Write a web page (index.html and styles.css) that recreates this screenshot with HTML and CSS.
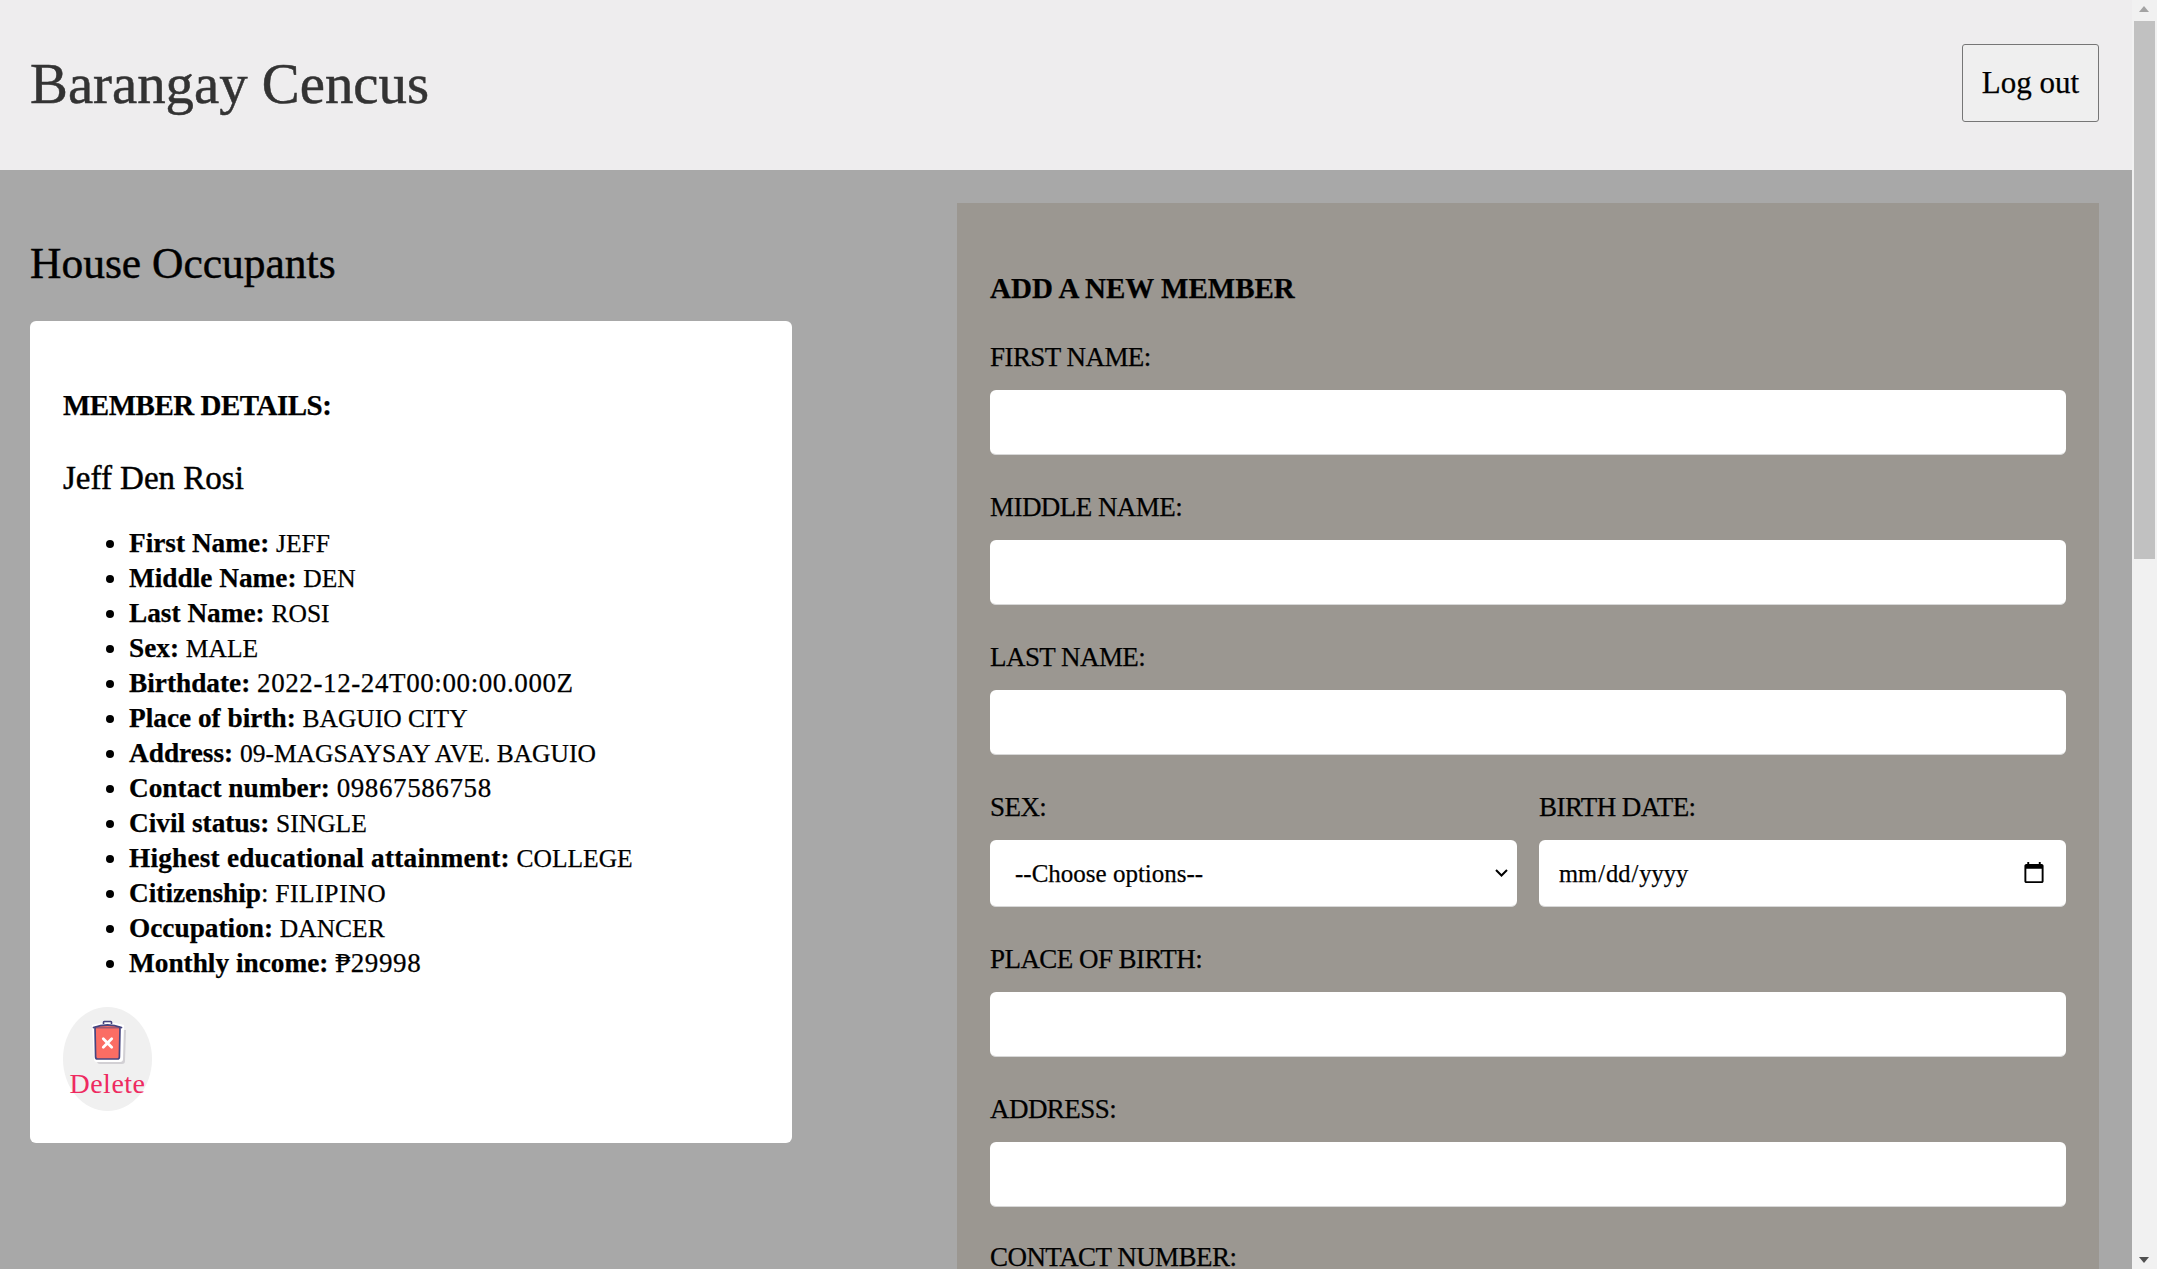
FILE: index.html
```html
<!DOCTYPE html>
<html lang="en">
<head>
<meta charset="utf-8">
<title>Barangay Cencus</title>
<link rel="stylesheet" href="styles.css">
</head>
<body>
<div class="page">
<header class="topbar">
  <h1 class="brand">Barangay Cencus</h1>
  <button class="logout" type="button">Log out</button>
</header>
<main class="content">
  <section class="occupants">
    <h2 class="occupants-title">House Occupants</h2>
    <article class="card">
      <h3 class="card-title">MEMBER DETAILS:</h3>
      <h3 class="member-name">Jeff Den Rosi</h3>
      <ul class="details">
        <li><b>First Name:</b> <span class="val">JEFF</span></li>
        <li><b>Middle Name:</b> <span class="val">DEN</span></li>
        <li><b>Last Name:</b> <span class="val">ROSI</span></li>
        <li><b>Sex:</b> <span class="val">MALE</span></li>
        <li><b>Birthdate:</b> <span class="num">2022-12-24T00:00:00.000Z</span></li>
        <li><b>Place of birth:</b> <span class="val">BAGUIO CITY</span></li>
        <li><b>Address:</b> <span class="val">09-MAGSAYSAY AVE. BAGUIO</span></li>
        <li><b>Contact number:</b> <span class="num">09867586758</span></li>
        <li><b>Civil status:</b> <span class="val">SINGLE</span></li>
        <li><b class="long">Highest educational attainment:</b> <span class="val">COLLEGE</span></li>
        <li><b>Citizenship</b>: <span class="val wide">FILIPINO</span></li>
        <li><b>Occupation:</b> <span class="val">DANCER</span></li>
        <li><b>Monthly income:</b> <span class="num">₱29998</span></li>
      </ul>
      <button class="delete" type="button">
        <svg class="trash" viewBox="0 0 36 46" width="36" height="46" aria-hidden="true">
          <path d="M7 10h28l-1 31a3 3 0 0 1-3 3H9a3 3 0 0 1-3-3z" fill="#d2d0d4"/>
          <path d="M1 5Q17 0 33 5L32 39a3 3 0 0 1-3 3H6a3 3 0 0 1-3-3z" fill="#fff"/>
          <path d="M12.500 4V2.200q0-.7.7-.7h6.600q.7 0 .7.7V4" fill="none" stroke="#45447f" stroke-width="1.600"/>
          <path d="M4 7.500 29 7.500 28.400 37a2 2 0 0 1-2 2H6.600a2 2 0 0 1-2-2z" fill="#fb6d64" stroke="#45447f" stroke-width="1.700" stroke-linejoin="round"/>
          <path d="M2.500 7.500Q16.500 2.500 30.500 7.500" fill="#fb6d64" stroke="#45447f" stroke-width="1.800" stroke-linecap="round"/>
          <path d="M12.300 18.800l8.400 8.400m0-8.400l-8.400 8.400" stroke="#fff" stroke-width="2.800" fill="none" stroke-linecap="round"/>
        </svg>
        <span class="delete-label">Delete</span>
      </button>
    </article>
  </section>
  <form class="panel">
    <h3 class="panel-title">ADD A NEW MEMBER</h3>
    <label class="field"><span>FIRST NAME:</span><input type="text"></label>
    <label class="field"><span>MIDDLE NAME:</span><input type="text"></label>
    <label class="field"><span>LAST NAME:</span><input type="text"></label>
    <div class="field-row">
      <label class="field"><span>SEX:</span>
        <select><option>--Choose options--</option></select>
      </label>
      <label class="field"><span>BIRTH DATE:</span><input type="date"></label>
    </div>
    <label class="field"><span>PLACE OF BIRTH:</span><input type="text"></label>
    <label class="field"><span>ADDRESS:</span><input type="text"></label>
    <label class="field field-last"><span>CONTACT NUMBER:</span></label>
  </form>
</main>
</div>
<aside class="scrollbar" aria-hidden="true">
  <span class="arrow arrow-up"></span>
  <span class="thumb"></span>
  <span class="arrow arrow-down"></span>
</aside>
</body>
</html>
```
FILE: styles.css
```css
* { box-sizing: border-box; }
html, body { height: 100%; }
body {
  margin: 0;
  display: flex;
  overflow: hidden;
  background: #a8a8a8;
  font-family: "Liberation Serif", "Times New Roman", serif;
  color: #000;
  -webkit-text-stroke: .25px currentColor;
}
.page { flex: 1; min-width: 0; display: flex; flex-direction: column; height: 100%; overflow: hidden; }
.scrollbar {
  width: 25px;
  height: 100%;
  background: #f1f1f1;
  display: flex;
  flex-direction: column;
  align-items: center;
}
.arrow { height: 21px; width: 100%; flex: none; position: relative; }
.arrow::after {
  content: "";
  position: absolute;
  left: 7px;
  border-left: 5.5px solid transparent;
  border-right: 5.5px solid transparent;
}
.arrow-up::after { top: 6px; border-bottom: 6px solid #a3a3a3; }
.arrow-down { margin-top: auto; }
.arrow-down::after { bottom: 6px; border-top: 6px solid #505050; }
.thumb { width: 21px; height: 538px; background: #c1c1c1; }
.topbar {
  flex: none;
  height: 170px;
  background: #eeedee;
  display: flex;
  align-items: center;
  justify-content: space-between;
  padding: 0 33px 0 30px;
}
.brand {
  margin: 0 0 3px;
  font-size: 56.8px;
  font-weight: 400;
  color: #333;
  -webkit-text-stroke: .5px #333;
}
.logout {
  width: 137px;
  height: 78px;
  margin-bottom: 4px;
  padding-top: 0;
  font: inherit;
  font-size: 31px;
  background: #efefef;
  border: 1.5px solid #767676;
  border-radius: 3px;
  color: #000;
}
.content {
  flex: 1;
  min-height: 0;
  display: flex;
  justify-content: space-between;
  align-items: stretch;
  padding: 33px 33px 0 30px;
}
.occupants { width: 762px; }
.occupants-title {
  margin: 35px 0 0;
  height: 50px;
  line-height: 50px;
  font-size: 43.5px;
  font-weight: 400;
  -webkit-text-stroke: .45px #000;
}
.card {
  margin-top: 33px;
  height: 822px;
  background: #fff;
  border-radius: 6px;
  padding: 64px 33px 0;
}
.card-title, .member-name { margin: 0; }
.card-title { font-size: 29px; line-height: 40px; font-weight: 700; letter-spacing: -.5px; }
.member-name { margin-top: 33px; font-size: 33px; line-height: 40px; font-weight: 400; -webkit-text-stroke: .45px #000; }
.details {
  margin: 28px 0 0;
  padding: 0 0 0 66px;
  font-size: 27px;
  line-height: 35px;
}
.details b { font-size: 27.3px; line-height: 1; }
.details .long { letter-spacing: .2px; }
.val { font-size: 25.5px; line-height: 1; }
.wide { letter-spacing: .6px; }
.num { letter-spacing: .6px; line-height: 1; }
.delete {
  margin-top: 26px;
  width: 89px;
  height: 104px;
  border: 0;
  border-radius: 50%;
  background: #f0f0f0;
  padding: 13px 0 0;
  display: flex;
  flex-direction: column;
  align-items: center;
  font: inherit;
}
.trash { display: block; flex: none; margin-left: 2px; }
.delete-label { margin-top: 3px; font-size: 28px; line-height: 30px; color: #ee2a60; letter-spacing: .5px; -webkit-text-stroke: 0; }
.panel {
  width: 1142px;
  background: #9b9791;
  padding: 65px 33px 0;
}
.panel-title { margin: 0 0 31px; font-size: 29px; line-height: 40px; }
.field { display: block; flex: 1 1 0; min-width: 0; margin-bottom: 34px; }
.field span { display: block; padding-top: 1px; font-size: 27px; letter-spacing: -.55px; line-height: 35px; margin-bottom: 15px; }
.field-last { margin-bottom: 0; padding-top: 8px; }
.field-last span { padding: 0; line-height: 16px; margin: 0; }
.field input, .field select {
  display: block;
  width: 100%;
  height: 65px;
  border: 0;
  border-bottom: 1px solid #d8d8d8;
  border-radius: 6px;
  background-color: #fff;
  font-family: inherit;
  font-size: 24px;
  color: #000;
}
.field input { padding: 0 19px; }
.field input[type="date"] { height: 67px; padding: 1px 18px 0 19px; font-size: 24.5px; }
.field select {
  height: 67px;
  padding: 0 40px 0 25px;
  font-size: 25px;
  appearance: none;
  background-image: url("data:image/svg+xml,%3Csvg xmlns='http://www.w3.org/2000/svg' width='13' height='8' viewBox='0 0 13 8'%3E%3Cpath d='M1 1l5.500 5.500L12 1' fill='none' stroke='%23000' stroke-width='2'/%3E%3C/svg%3E");
  background-repeat: no-repeat;
  background-position: right 9px center;
}
.field-row { display: flex; gap: 22px; }
```
